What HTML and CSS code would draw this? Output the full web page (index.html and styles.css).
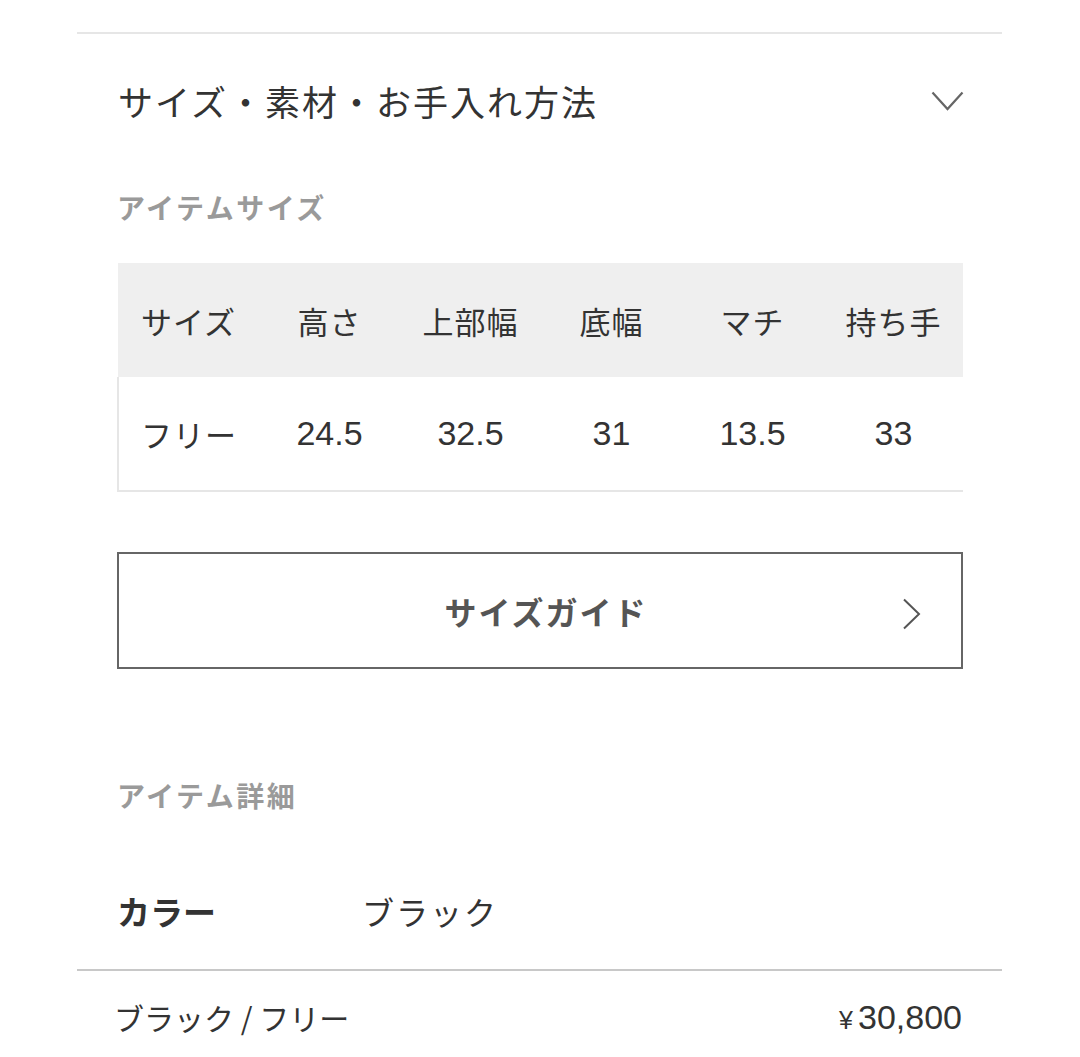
FILE: index.html
```html
<!DOCTYPE html>
<html lang="ja">
<head>
<meta charset="utf-8">
<link rel="stylesheet" href="styles.css">
</head>
<body>
<div class="page">
  <section class="accordion">
    <div class="acc-head">
      <h2 class="acc-title">サイズ・素材・お手入れ方法</h2>
      <svg class="chev-down" width="33" height="20" viewBox="0 0 33 20"><polyline points="1.5,1.5 16.5,18 31.5,1.5" fill="none" stroke="#666" stroke-width="2.2"/></svg>
    </div>
    <div class="acc-body">
      <h3 class="label">アイテムサイズ</h3>
      <div class="table-wrap">
        <table class="size-table">
          <thead>
            <tr><th>サイズ</th><th>高さ</th><th>上部幅</th><th>底幅</th><th>マチ</th><th>持ち手</th></tr>
          </thead>
          <tbody>
            <tr><td>フリー</td><td>24.5</td><td>32.5</td><td>31</td><td>13.5</td><td>33</td></tr>
          </tbody>
        </table>
      </div>
      <a class="guide-btn" href="#">
        <span class="guide-text">サイズガイド</span>
        <svg class="chev-right" width="20" height="32" viewBox="0 0 20 32"><polyline points="2,1.5 17,16 2,30.5" fill="none" stroke="#555" stroke-width="2"/></svg>
      </a>
      <h3 class="label label-detail">アイテム詳細</h3>
      <div class="detail-row">
        <span class="detail-key">カラー</span>
        <span class="detail-val">ブラック</span>
      </div>
    </div>
  </section>
  <div class="variant-row">
    <span class="variant-name">ブラック / フリー</span>
    <span class="variant-price"><span class="yen">¥</span>30,800</span>
  </div>
</div>
</body>
</html>
```

FILE: styles.css
```css
* { box-sizing: border-box; }
html, body {
  margin: 0;
  padding: 0;
  background: #fff;
}
body {
  font-family: "Noto Sans CJK JP", "Noto Sans", sans-serif;
  color: #333;
}
.page {
  margin-left: 77px;
  width: 925px;
  padding-top: 32px;
}
.accordion {
  border-top: 2px solid #e6e6e6;
  border-bottom: 2px solid #c8c8c8;
}
.acc-head {
  height: 132px;
  padding: 0 39px 0 41px;
  display: flex;
  align-items: center;
  justify-content: space-between;
}
.acc-title {
  margin: 0;
  font-size: 35px;
  font-weight: 400;
  color: #333;
  letter-spacing: 2px;
  line-height: 1;
}
.chev-down { display: block; margin-right: -1px; margin-top: 2px; }
.acc-body {
  padding: 0 39px 0 40px;
}
.label {
  margin: 21px 0 0 0;
  font-size: 28px;
  line-height: 40px;
  font-weight: 700;
  color: #9a9a9a;
  letter-spacing: 2.5px;
}
.table-wrap {
  margin-top: 36px;
  overflow: hidden;
}
.size-table {
  width: 846px;
  border-collapse: collapse;
  table-layout: fixed;
}
.size-table th,
.size-table td {
  width: 141px;
  text-align: center;
  font-size: 31px;
  font-weight: 400;
  color: #333;
  padding: 0;
}
.size-table th {
  height: 114px;
  background: #efefef;
  letter-spacing: 1px;
}
.size-table td {
  height: 114px;
  border-bottom: 2px solid #e6e6e6;
  font-family: "Liberation Sans", "Noto Sans CJK JP", sans-serif;
  font-size: 34px;
}
.size-table td:first-child {
  border-left: 2px solid #e6e6e6;
  font-family: "Noto Sans CJK JP", sans-serif;
  font-size: 31px;
  letter-spacing: 1px;
}
.guide-btn {
  margin-top: 60px;
  height: 117px;
  border: 2px solid #666;
  display: flex;
  align-items: center;
  justify-content: center;
  position: relative;
  text-decoration: none;
}
.guide-text {
  font-size: 32px;
  font-weight: 700;
  color: #555;
  letter-spacing: 2px;
  margin-left: 12px;
}
.chev-right {
  position: absolute;
  right: 39px;
  top: 44px;
}
.label-detail {
  margin-top: 106px;
}
.detail-row {
  margin-top: 76px;
  height: 40px;
  display: flex;
  align-items: center;
  margin-bottom: 38px;
}
.detail-key {
  width: 245px;
  font-size: 33px;
  font-weight: 700;
  color: #333;
}
.detail-val {
  font-size: 32px;
  color: #333;
  letter-spacing: 2px;
}
.variant-row {
  margin-top: 26px;
  padding: 0 40px 0 37px;
  height: 40px;
  display: flex;
  align-items: center;
  justify-content: space-between;
}
.variant-name {
  font-size: 30px;
  color: #333;
}
.variant-price {
  font-family: "Liberation Sans", "Noto Sans CJK JP", sans-serif;
  font-size: 34px;
  color: #333;
}
.yen {
  font-size: 25px;
  margin-right: 5px;
}
```
